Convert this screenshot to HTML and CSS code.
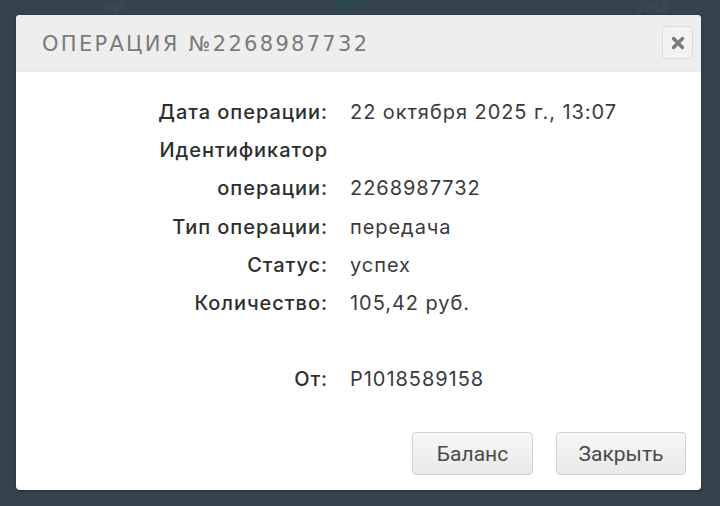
FILE: index.html
```html
<!DOCTYPE html>
<html lang="ru">
<head>
<meta charset="utf-8">
<title>Операция</title>
<link rel="stylesheet" href="styles.css">
</head>
<body>
<div class="backdrop">
  <span class="bg-text bg-rub">руб.</span>
  <span class="bg-circle"></span>
  <span class="bg-text bg-num">2268</span>
</div>
<div class="overlay">
  <div class="modal">
    <div class="modal-header">
      <h1 class="modal-title">ОПЕРАЦИЯ №2268987732</h1>
      <button class="close-btn" type="button" aria-label="Закрыть">
        <svg width="14" height="14" viewBox="0 0 14 14"><path d="M2.5 2.5 L11.5 11.5 M11.5 2.5 L2.5 11.5" stroke="#7a7a7a" stroke-width="3.4" stroke-linecap="round"/></svg>
      </button>
    </div>
    <div class="modal-body">
      <dl class="details">
        <dt>Дата операции:</dt><dd>22 октября 2025 г., 13:07</dd>
        <dt>Идентификатор операции:</dt><dd>2268987732</dd>
        <dt>Тип операции:</dt><dd>передача</dd>
        <dt>Статус:</dt><dd>успех</dd>
        <dt>Количество:</dt><dd>105,42 руб.</dd>
        <dt class="empty"></dt><dd class="empty"></dd>
        <dt>От:</dt><dd>P1018589158</dd>
      </dl>
      <div class="actions">
        <button class="btn btn-balance" type="button">Баланс</button>
        <button class="btn btn-close" type="button">Закрыть</button>
      </div>
    </div>
  </div>
</div>
</body>
</html>
```
FILE: styles.css
```css
html, body {
  margin: 0;
  padding: 0;
}
body {
  width: 720px;
  height: 506px;
  background: #36434c;
  position: relative;
  overflow: hidden;
  font-family: Inter, "DejaVu Sans", sans-serif;
}
.backdrop {
  position: absolute;
  inset: 0;
}
.bg-text {
  position: absolute;
  color: #3e4c55;
  font-size: 13px;
  line-height: 14px;
  font-family: Inter, sans-serif;
}
.bg-rub { left: 104px; top: 0; }
.bg-num { left: 636px; top: 0; }
.bg-circle {
  position: absolute;
  left: 330px;
  top: -30px;
  width: 40px;
  height: 45px;
  border-radius: 50%;
  background: #2f4751;
}
.overlay {
  position: relative;
  padding: 15px 19px 0 16px;
}
.modal {
  background: #fff;
  border-radius: 4px;
  height: 475px;
  display: flex;
  flex-direction: column;
  overflow: hidden;
  box-shadow: 0 1px 3px rgba(0,0,0,0.35);
}
.modal-header {
  background: #eeeeee;
  height: 57px;
  display: flex;
  align-items: center;
  justify-content: space-between;
  padding: 0 8px 0 26px;
  border-bottom: 1px solid #e8e8e8;
  box-sizing: border-box;
}
.modal-title {
  margin: 0;
  font-family: "DejaVu Sans", sans-serif;
  font-weight: normal;
  font-size: 21px;
  letter-spacing: 2.3px;
  color: #7a7a7a;
  padding-top: 1px;
}
.close-btn {
  width: 31px;
  height: 33px;
  border: 1px solid #dcdcdc;
  border-radius: 4px;
  background: #f2f2f2;
  display: flex;
  align-items: center;
  justify-content: center;
  padding: 0;
  margin-top: -1px;
}
.modal-body {
  flex: 1;
  display: flex;
  flex-direction: column;
  padding: 21px 15px 15px 133px;
}
.details {
  margin: 0;
  display: grid;
  grid-template-columns: 179px 1fr;
  column-gap: 22px;
  font-size: 20px;
  line-height: 38.2px;
  letter-spacing: 0.95px;
  color: #333;
}
.details dt {
  text-align: right;
  font-weight: 500;
  color: #2e2e2e;
}
.details dd {
  margin: 0;
  font-weight: 400;
  color: #3a3a3a;
  align-self: end;
}
.details .empty {
  height: 38px;
}
.actions {
  margin-top: auto;
  display: flex;
  justify-content: flex-end;
  gap: 23px;
}
.btn {
  height: 43px;
  border: 1px solid #d2d2d2;
  border-radius: 4px;
  background: linear-gradient(#f7f7f7, #e9e9e9);
  font-family: Roboto, sans-serif;
  font-size: 21px;
  color: #4a4a4a;
  padding: 0;
}
.btn-balance { width: 121px; }
.btn-close { width: 130px; }
```
